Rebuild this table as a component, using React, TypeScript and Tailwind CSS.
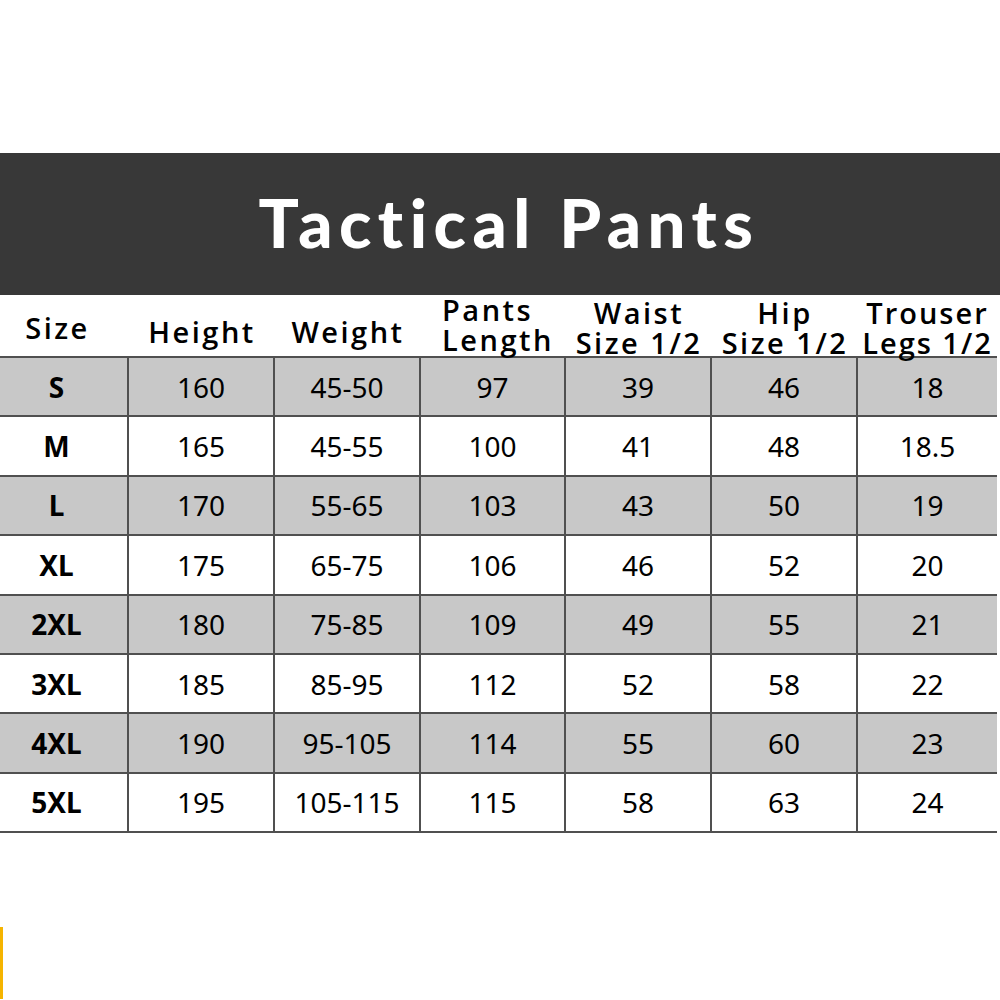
const rows = [
  ["S", "160", "45-50", "97", "39", "46", "18"],
  ["M", "165", "45-55", "100", "41", "48", "18.5"],
  ["L", "170", "55-65", "103", "43", "50", "19"],
  ["XL", "175", "65-75", "106", "46", "52", "20"],
  ["2XL", "180", "75-85", "109", "49", "55", "21"],
  ["3XL", "185", "85-95", "112", "52", "58", "22"],
  ["4XL", "190", "95-105", "114", "55", "60", "23"],
  ["5XL", "195", "105-115", "115", "58", "63", "24"],
];

const cols = "grid grid-cols-[129px_146px_146px_145px_146px_146px_139px] w-[997px]";

export default function App() {
  return (
    <div className="w-[1000px] h-[1000px] bg-white overflow-hidden font-['Noto_Sans',sans-serif] text-black">
      <div className="h-[153px]" />
      <div className="h-[142px] bg-[#383838] flex items-center justify-center">
        <h1 className="font-['Lato',sans-serif] font-black text-[67px] tracking-[6.5px] text-white leading-none pb-[4px] pl-[18px]">
          Tactical Pants
        </h1>
      </div>

      <div className={cols + " h-[61px] font-['Open_Sans',sans-serif] font-semibold text-[29px] leading-[30px] tracking-[2.5px] whitespace-nowrap"}>
        <div className="flex flex-col justify-end items-center pb-[15px] pr-[14px]">Size</div>
        <div className="flex flex-col justify-end items-center pb-[11px]">Height</div>
        <div className="flex flex-col justify-end items-center pb-[11px]">Weight</div>
        <div className="flex flex-col justify-end items-start pb-[3px] pl-[21px]">
          <span>Pants</span>
          <span>Length</span>
        </div>
        <div className="flex flex-col justify-end items-center">
          <span>Waist</span>
          <span>Size 1/2</span>
        </div>
        <div className="flex flex-col justify-end items-center">
          <span>Hip</span>
          <span>Size 1/2</span>
        </div>
        <div className="flex flex-col justify-end items-center tracking-[2px]">
          <span>Trouser</span>
          <span>Legs 1/2</span>
        </div>
      </div>

      <div className="w-[997px] border-t-2 border-[#505050]">
        {rows.map((r, i) => (
          <div
            key={r[0]}
            className={cols + " h-[59.4px] border-b-2 border-[#505050] " + (i % 2 === 0 ? "bg-[#c8c8c8]" : "bg-white")}
          >
            {r.map((v, j) => (
              <div
                key={j}
                className={
                  "flex items-center justify-center text-[28px] " +
                  (j === 0 ? "font-bold pr-[14px] " : "") +
                  (j < 6 ? "border-r-2 border-[#505050]" : "")
                }
              >
                {v}
              </div>
            ))}
          </div>
        ))}
      </div>

      <div className="mt-[94px] w-[3px] h-[72px] bg-[#f5b400]" />
    </div>
  );
}
